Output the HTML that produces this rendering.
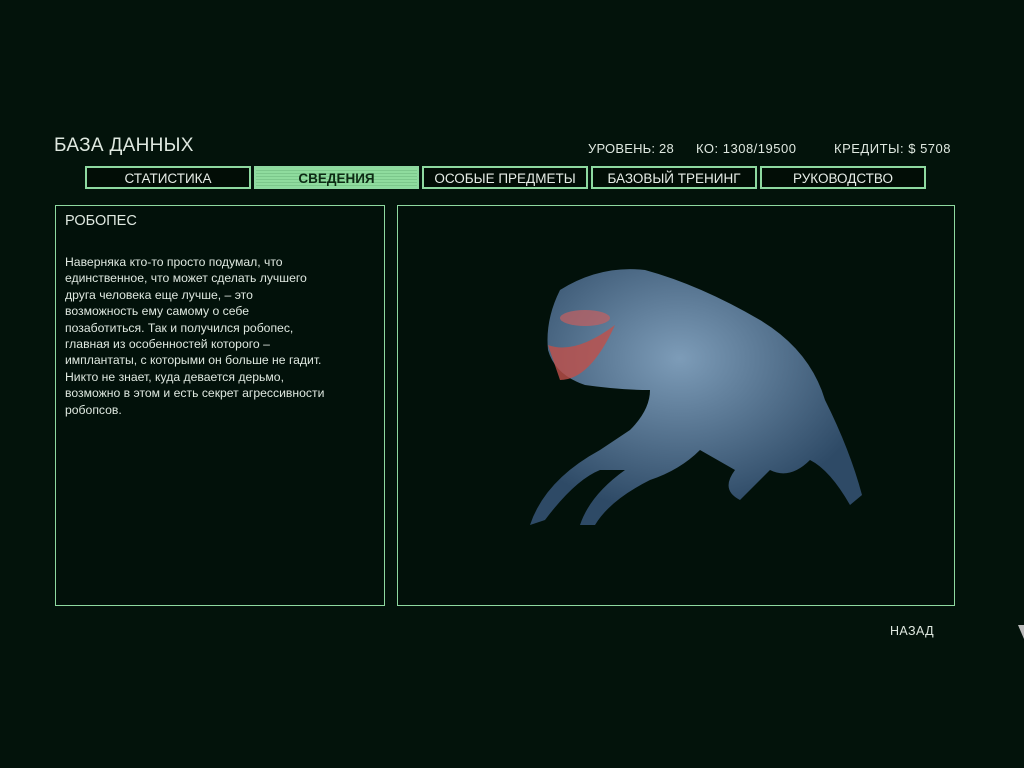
<!DOCTYPE html><html><head><meta charset="utf-8"><style>
body{margin:0;width:1024px;height:768px;background:#03130b;font-family:"Liberation Sans","DejaVu Sans",sans-serif;color:#dfe8e0;overflow:hidden;position:relative}
.a{position:absolute;white-space:nowrap}
.tab{position:absolute;top:166px;height:23px;border:2px solid #8ed9a0;box-sizing:border-box;font-size:13.5px;text-align:center;line-height:22px;color:#e6ece6;background:#020d06}
.box{position:absolute;border:1.5px solid #8ed9a0;box-sizing:border-box;background:#02110a}
</style></head><body>
<div class="a" style="left:54px;top:135px;font-size:19px;letter-spacing:.3px">БАЗА ДАННЫХ</div>
<div class="a" style="left:588px;top:141px;font-size:13px;letter-spacing:.2px">УРОВЕНЬ: 28</div>
<div class="a" style="left:696px;top:141px;font-size:13px;letter-spacing:.5px">КО: 1308/19500</div>
<div class="a" style="left:834px;top:141px;font-size:13px;letter-spacing:.5px">КРЕДИТЫ: $ 5708</div>
<div class="tab" style="left:85px;width:166px">СТАТИСТИКА</div>
<div class="tab" style="left:254px;width:165px;background:repeating-linear-gradient(#8fdc9e 0 2px,#7cc88c 2px 3px);color:#0d2a14;font-weight:bold">СВЕДЕНИЯ</div>
<div class="tab" style="left:422px;width:166px">ОСОБЫЕ ПРЕДМЕТЫ</div>
<div class="tab" style="left:591px;width:166px">БАЗОВЫЙ ТРЕНИНГ</div>
<div class="tab" style="left:760px;width:166px">РУКОВОДСТВО</div>
<div class="box" style="left:55px;top:205px;width:330px;height:401px"></div>
<div class="a" style="left:65px;top:213px;font-size:14.5px">РОБОПЕС</div>
<div class="a" style="left:65px;top:254px;font-size:12.2px;line-height:16.4px">Наверняка кто-то просто подумал, что<br>единственное, что может сделать лучшего<br>друга человека еще лучше, – это<br>возможность ему самому о себе<br>позаботиться. Так и получился робопес,<br>главная из особенностей которого –<br>имплантаты, с которыми он больше не гадит.<br>Никто не знает, куда девается дерьмо,<br>возможно в этом и есть секрет агрессивности<br>робопсов.</div>
<div class="box" style="left:397px;top:205px;width:558px;height:401px"></div>
<svg class="a" style="left:520px;top:260px" width="360" height="290" viewBox="520 260 360 290">
<defs><radialGradient id="g" cx="45%" cy="35%" r="60%"><stop offset="0" stop-color="#7d9cb8"/><stop offset="1" stop-color="#2e4a66"/></radialGradient></defs>
<g fill="url(#g)">
<path d="M560 290 Q600 265 645 270 Q700 285 760 320 Q810 350 825 400 Q850 450 862 495 L850 505 Q830 470 810 460 Q790 480 770 470 L740 500 Q720 490 735 470 L700 450 Q680 470 650 480 Q610 500 595 525 L580 525 Q590 495 625 470 L600 470 Q575 480 545 520 L530 525 Q545 480 600 450 L630 430 Q650 410 650 390 Q620 390 585 385 Q555 375 548 350 Q545 320 560 290Z"/>
</g>
<path d="M548 345 Q575 355 615 325 Q590 380 560 380Z" fill="#c0504a" opacity=".8"/>
<ellipse cx="585" cy="318" rx="25" ry="8" fill="#c46060" opacity=".7"/>
</svg>
<div class="a" style="left:890px;top:624px;font-size:12.5px;letter-spacing:.4px">НАЗАД</div>
<div class="a" style="left:1018px;top:625px;width:0;height:0;border-left:6px solid transparent;border-top:14px solid #bbb"></div>
</body></html>
